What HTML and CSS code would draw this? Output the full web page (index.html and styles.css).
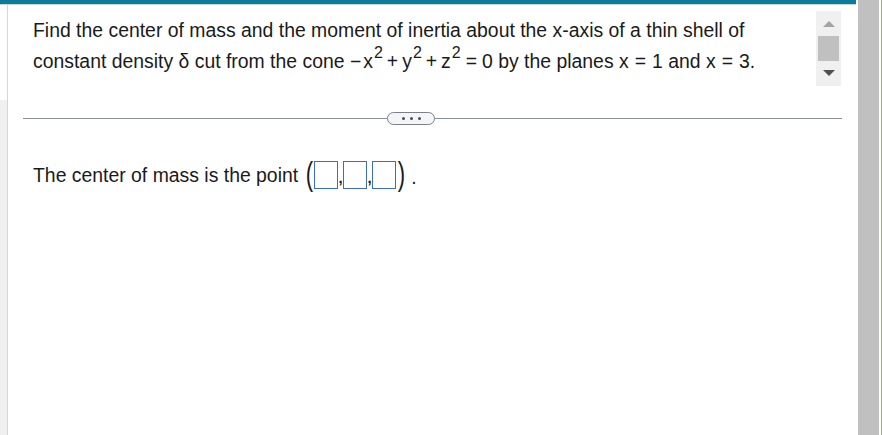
FILE: index.html
```html
<!DOCTYPE html>
<html>
<head>
<meta charset="utf-8">
<link rel="stylesheet" href="styles.css">
</head>
<body>
<div class="page">
  <div class="left">
    <div class="topbar"></div>
    <div class="main">
      <div class="gutter"><div class="gutter-top"></div><div class="gutter-bottom"></div></div>
      <div class="content">
        <div class="question">
          <p class="qtext">Find the center of mass and the moment of inertia about the x-axis of a thin shell of constant density δ cut from the cone <span class="math"><span class="neg">−</span>x<sup>2</sup><span class="op">+</span>y<sup>2</sup><span class="op">+</span>z<sup>2</sup><span class="op eq">=</span>0</span> by the planes <span class="math">x<span class="op eq2">=</span>1</span> and <span class="math">x<span class="op eq2">=</span>3</span>.</p>
          <div class="miniscroll">
            <div class="arrow-up"></div>
            <div class="thumb"></div>
            <div class="arrow-down"></div>
          </div>
        </div>
        <div class="divider">
          <div class="rule rule-left"></div>
          <div class="pill"><span class="dot"></span><span class="dot"></span><span class="dot"></span></div>
          <div class="rule rule-right"></div>
        </div>
        <div class="answer">
          <span class="atext">The center of mass is the point</span>
          <span class="paren">(</span><span class="box"></span><span class="comma">,</span><span class="box"></span><span class="comma">,</span><span class="box"></span><span class="paren">)</span><span class="period">.</span>
        </div>
      </div>
    </div>
  </div>
  <div class="rightbar">
    <div class="rb-gap"></div>
    <div class="rb-gray"></div>
    <div class="rb-gap2"></div>
    <div class="rb-green"></div>
  </div>
</div>
</body>
</html>
```

FILE: styles.css
```css
html, body {
  margin: 0;
  padding: 0;
  background: #ffffff;
}
body {
  width: 882px;
  height: 435px;
  overflow: hidden;
  font-family: "Liberation Sans", Arial, sans-serif;
  color: #1a1a1a;
}
.page {
  display: flex;
  width: 882px;
  height: 435px;
}
.left {
  width: 856px;
  display: flex;
  flex-direction: column;
}
.topbar {
  height: 4px;
  background: #0b7b9c;
  border-bottom: 1px solid #c9d3da;
}
.main {
  flex: 1;
  display: flex;
}
.gutter {
  width: 7px;
  border-right: 1px solid #d6d6dc;
  display: flex;
  flex-direction: column;
}
.gutter-top {
  height: 95px;
  background: #ffffff;
}
.gutter-bottom {
  flex: 1;
  background: #f0f0f0;
}
.content {
  flex: 1;
  display: flex;
  flex-direction: column;
}
.question {
  display: flex;
  align-items: flex-start;
  height: 98px;
}
.qtext {
  margin: 10px 0 0 25px;
  width: 760px;
  font-size: 19.4px;
  line-height: 31px;
}
.math {
  white-space: nowrap;
}
.neg {
  margin: 0 2px 0 0;
}
.op {
  margin: 0 4px;
}
.op.eq {
  margin: 0 5px;
}
.op.eq2 {
  margin: 0 6px;
}
sup {
  font-size: 16px;
  line-height: 0;
  vertical-align: 10px;
  margin-left: 1px;
}
.miniscroll {
  margin: 6px 15px 0 auto;
  width: 25px;
  height: 75px;
  background: #f0f0f0;
  display: flex;
  flex-direction: column;
  align-items: center;
}
.arrow-up {
  margin-top: 10px;
  width: 0;
  height: 0;
  border-left: 6px solid transparent;
  border-right: 6px solid transparent;
  border-bottom: 6px solid #a3a3a3;
}
.thumb {
  margin-top: 9px;
  width: 21px;
  height: 25px;
  background: #c0c0c0;
}
.arrow-down {
  margin-top: 9px;
  width: 0;
  height: 0;
  border-left: 6px solid transparent;
  border-right: 6px solid transparent;
  border-top: 6px solid #505050;
}
.divider {
  display: flex;
  align-items: center;
  margin: 9px 14px 0 15px;
  height: 13px;
}
.rule {
  height: 1px;
  background: #8a909a;
}
.rule-left {
  width: 364px;
}
.rule-right {
  flex: 1;
}
.pill {
  width: 46px;
  height: 11px;
  border: 1px solid #7a808a;
  border-radius: 7px;
  background: #f4f5f7;
  display: flex;
  justify-content: center;
  align-items: center;
  gap: 5px;
}
.dot {
  width: 3px;
  height: 3px;
  border-radius: 50%;
  background: #4a4f58;
}
.answer {
  display: flex;
  align-items: flex-start;
  margin: 36px 0 0 25px;
  height: 34px;
  font-size: 19.4px;
  line-height: 28px;
}
.atext {
  margin-right: 6px;
}
.paren {
  width: 10px;
  text-align: center;
  font-size: 34px;
  line-height: 28px;
  font-weight: normal;
  transform: scaleX(0.65);
  margin-top: -2px;
}
.box {
  width: 22px;
  height: 26px;
  border: 1px solid #3a6cc8;
}
.comma {
  font-size: 15px;
  font-weight: bold;
  width: 5px;
  line-height: 28px;
  margin-top: 3px;
  text-align: center;
}
.period {
  margin-left: 5px;
  margin-top: 2px;
}
.rightbar {
  width: 26px;
  display: flex;
}
.rb-gap {
  width: 2px;
}
.rb-gray {
  width: 21px;
  background: #c0c0c0;
}
.rb-gap2 {
  width: 2px;
}
.rb-green {
  width: 1px;
  background: #8cc152;
}
```
